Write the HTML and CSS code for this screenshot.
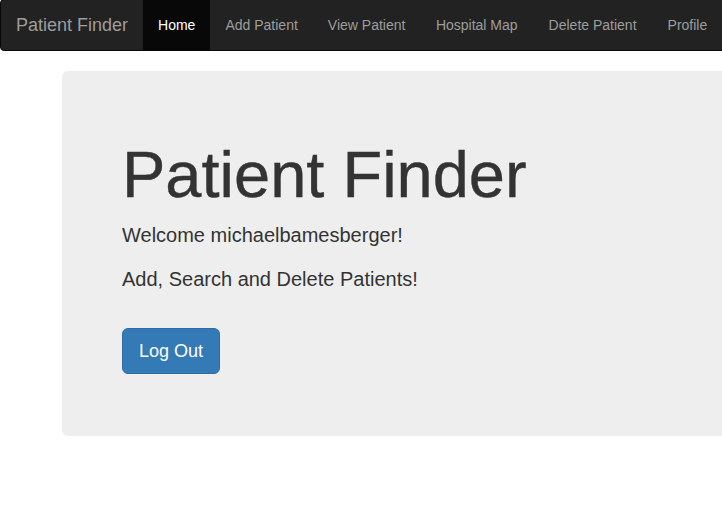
FILE: index.html
```html
<!DOCTYPE html>
<html>
<head>
<meta charset="utf-8">
<title>Patient Finder</title>
<link rel="stylesheet" href="styles.css">
</head>
<body>
<nav class="navbar">
  <a class="brand" href="#">Patient Finder</a>
  <ul class="nav">
    <li class="active"><a href="#">Home</a></li>
    <li><a href="#">Add Patient</a></li>
    <li><a href="#">View Patient</a></li>
    <li><a href="#">Hospital Map</a></li>
    <li><a href="#">Delete Patient</a></li>
    <li><a href="#">Profile</a></li>
  </ul>
</nav>
<main class="page">
  <section class="jumbotron">
    <h1 class="title">Patient Finder</h1>
    <p class="lead">Welcome michaelbamesberger!</p>
    <p class="lead">Add, Search and Delete Patients!</p>
    <div class="actions"><a class="btn" href="#">Log Out</a></div>
  </section>
</main>
</body>
</html>
```
FILE: styles.css
```css
html, body {
  margin: 0;
  padding: 0;
  overflow: hidden;
  background: #fff;
}
body {
  font-family: "Liberation Sans", Arial, sans-serif;
  font-size: 14px;
  line-height: 1.42857;
  color: #333;
  width: 722px;
  height: 524px;
}
.navbar {
  display: flex;
  align-items: stretch;
  width: 780px;
  min-height: 50px;
  margin-top: -1px;
  background: #222;
  border: 1px solid #080808;
  border-radius: 4px;
  box-sizing: content-box;
}
.brand {
  display: block;
  padding: 15px;
  font-size: 18px;
  line-height: 20px;
  color: #9d9d9d;
  text-decoration: none;
}
.nav {
  display: flex;
  list-style: none;
  margin: 0;
  padding: 0;
}
.nav a {
  display: block;
  padding: 15px;
  line-height: 20px;
  color: #9d9d9d;
  text-decoration: none;
}
.nav li:nth-child(n+4) a {
  padding-left: 15.5px;
  padding-right: 15.5px;
}
.nav .active a {
  background: #080808;
  color: #fff;
}
.page {
  padding: 20px 0 0 62px;
}
.jumbotron {
  width: 720px;
  box-sizing: border-box;
  padding: 48px 60px 0;
  height: 365px;
  background: #eee;
  border-radius: 6px;
}
.title {
  margin: 20px 0 10px;
  font-size: 65px;
  line-height: 1.1;
  font-weight: 500;
  color: #333;
  -webkit-text-stroke: 0.4px #333;
}
.lead {
  margin: 0 0 15px;
  font-size: 20px;
  line-height: 29.4px;
  font-weight: 300;
}
.actions {
  margin-top: 34px;
  display: flex;
}
.btn {
  display: block;
  padding: 10px 16px;
  font-size: 18px;
  line-height: 24px;
  color: #fff;
  background: #337ab7;
  border: 1px solid #2e6da4;
  border-radius: 6px;
  text-decoration: none;
}
```
